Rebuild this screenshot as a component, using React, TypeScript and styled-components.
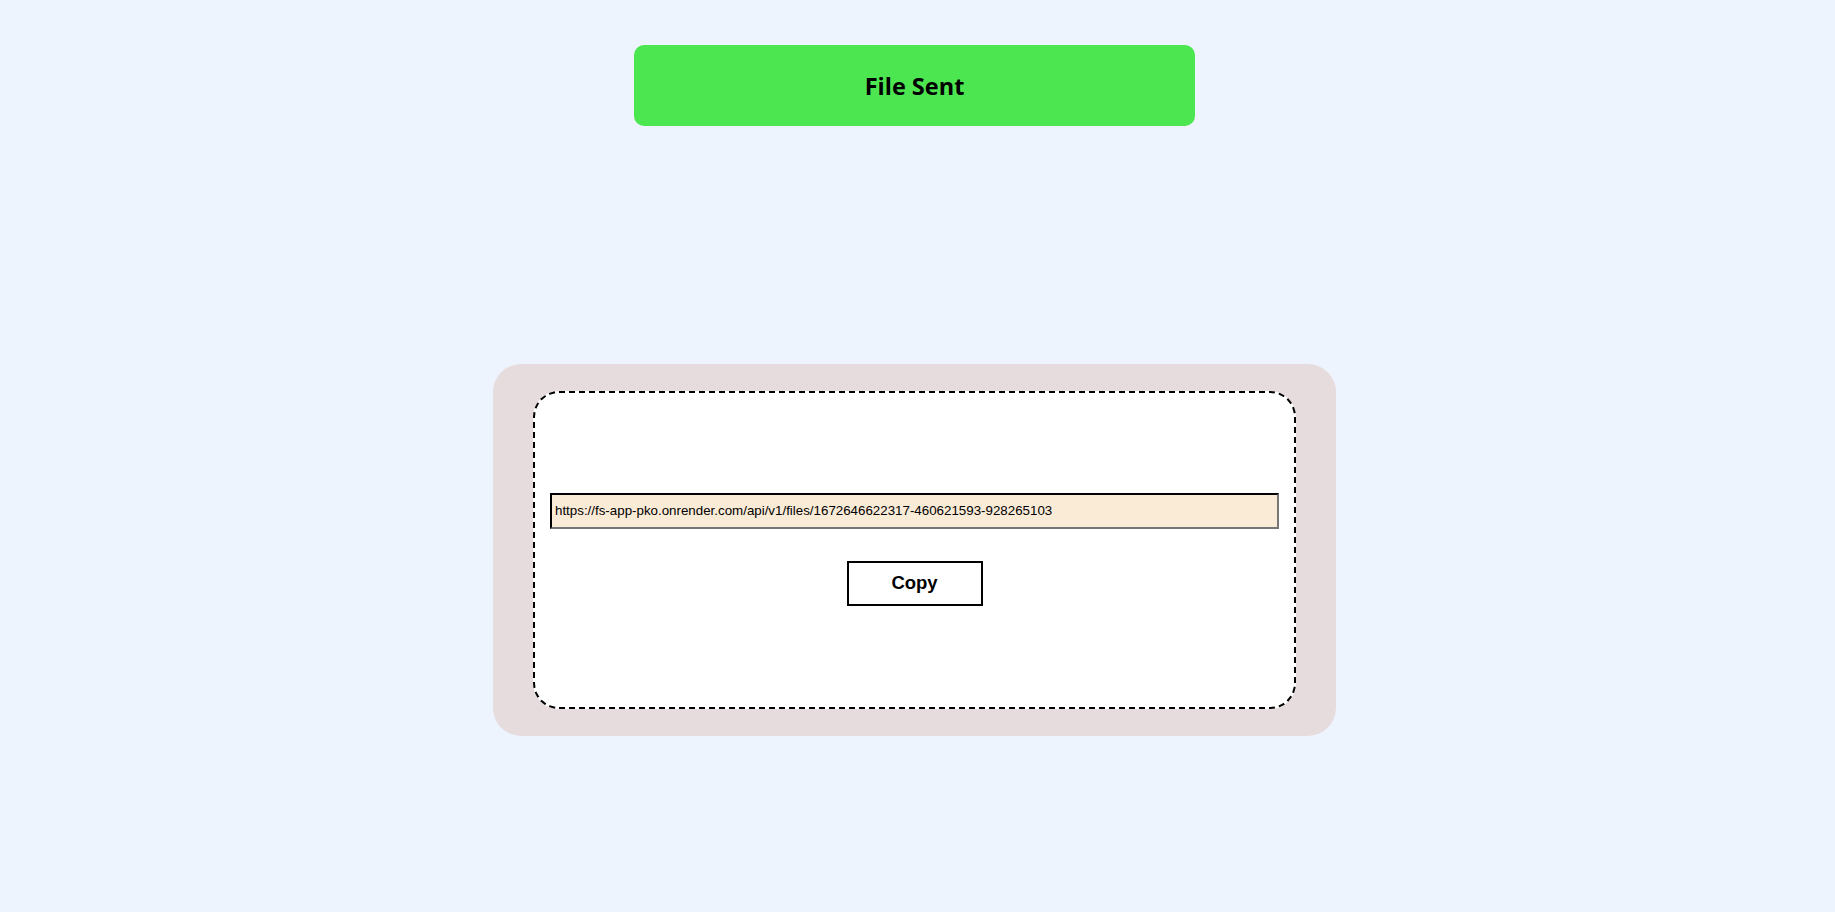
import React from "react";
import styled, { createGlobalStyle } from "styled-components";

const Global = createGlobalStyle`
  html, body {
    margin: 0;
    padding: 0;
    background: #edf4fe;
  }
  body {
    font-family: "Liberation Sans", Arial, sans-serif;
  }
`;

const Page = styled.main`
  min-height: 912px;
  box-sizing: border-box;
  padding: 45px 6px 0 0;
  display: flex;
  flex-direction: column;
  align-items: center;
`;

const Banner = styled.div`
  width: 561px;
  height: 81px;
  border-radius: 10px;
  background: #4ce651;
  display: flex;
  align-items: center;
  justify-content: center;
  font-family: "Open Sans", "Noto Sans", sans-serif;
  font-weight: 700;
  font-size: 23.5px;
  color: #000;
`;

const Card = styled.section`
  margin-top: 238px;
  width: 843px;
  height: 372px;
  box-sizing: border-box;
  padding: 27px 40px;
  border-radius: 28px;
  background: #e7dcdd;
  display: flex;
`;

const DropZone = styled.div`
  flex: 1;
  box-sizing: border-box;
  border: 2px dashed #000;
  border-radius: 26px;
  background: #fff;
  display: flex;
  flex-direction: column;
  align-items: center;
  justify-content: center;
  gap: 32px;
  padding: 0 15px 2px 15px;
`;

const UrlInput = styled.input`
  width: 729px;
  height: 36px;
  box-sizing: border-box;
  align-self: flex-start;
  border: 2px inset #767676;
  border-top-color: #222;
  border-left-color: #222;
  background: #faebd7;
  font-family: "Liberation Sans", Arial, sans-serif;
  font-size: 13.333px;
  color: #000;
  padding: 1px 3px;
  outline: none;
`;

const CopyButton = styled.button`
  width: 136px;
  height: 45px;
  box-sizing: border-box;
  border: 2px solid #000;
  background: #fff;
  font-family: "Liberation Sans", Arial, sans-serif;
  font-weight: 700;
  font-size: 18.5px;
  color: #000;
  cursor: pointer;
`;

export default function App() {
  const url =
    "https://fs-app-pko.onrender.com/api/v1/files/1672646622317-460621593-928265103";
  return (
    <>
      <Global />
      <Page>
        <Banner>File Sent</Banner>
        <Card>
          <DropZone>
            <UrlInput type="text" value={url} readOnly />
            <CopyButton type="button">Copy</CopyButton>
          </DropZone>
        </Card>
      </Page>
    </>
  );
}
